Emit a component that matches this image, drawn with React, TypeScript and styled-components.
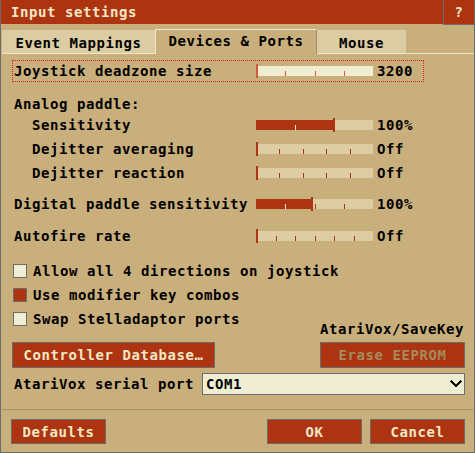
import React from "react";
import styled, { createGlobalStyle } from "styled-components";

const C = {
  bg: "#c9af7c",
  tab: "#dbcca3",
  cream: "#f0eed2",
  light: "#efe8c8",
  red: "#ac3410",
  redLight: "#d4583a",
  gray: "#6c6c6c",
  sep: "#a48e66",
  btnText: "#f2e8c4",
  disabled: "#a48c5c",
};

const Global = createGlobalStyle`
  html, body { margin: 0; padding: 0; background: ${C.bg}; }
  body {
    font-family: "DejaVu Sans Mono", "Liberation Mono", monospace;
    font-size: 14px;
    letter-spacing: 0.57px;
    font-weight: bold;
  }
  * { box-sizing: border-box; }
`;

const Window = styled.div`
  width: 475px;
  height: 453px;
  background: ${C.bg};
  border: 1px solid ${C.gray};
  border-top: none;
  display: flex;
  flex-direction: column;
  color: #000;
  line-height: 1;
`;

const TitleBar = styled.div`
  height: 24px;
  background: ${C.red};
  display: flex;
  align-items: flex-start;
  color: ${C.btnText};
`;

const TitleText = styled.div`
  padding-left: 10px;
  line-height: 24px;
`;

const HelpButton = styled.div`
  margin-left: auto;
  width: 31px;
  height: 25px;
  border-left: 1px solid ${C.gray};
  border-bottom: 1px solid ${C.gray};
  background: ${C.red};
  display: flex;
  align-items: center;
  justify-content: center;
`;

const TabBar = styled.div`
  margin-top: 5px;
  padding-left: 1px;
  height: 25px;
  display: flex;
  align-items: flex-end;
`;

const Tab = styled.div<{ $active?: boolean; $w: number }>`
  width: ${(p) => p.$w}px;
  height: ${(p) => (p.$active ? 25 : 24)}px;
  display: flex;
  justify-content: center;
  align-items: center;
  background: ${(p) => (p.$active ? C.bg : C.tab)};
  border-bottom: ${(p) => (p.$active ? "none" : `1px solid ${C.light}`)};
  border-top: ${(p) => (p.$active ? `1px solid ${C.light}` : "none")};
  border-left: ${(p) => (p.$active ? `1px solid ${C.light}` : "none")};
  border-right: ${(p) => (p.$active ? `1px solid ${C.sep}` : "none")};
  padding-top: ${(p) => (p.$active ? 0 : 2)}px;
  padding-bottom: ${(p) => (p.$active ? 3 : 0)}px;
`;

const TabFiller = styled.div`
  flex: 1;
  height: 1px;
  background: ${C.light};
`;

const Body = styled.div`
  padding: 6px 9px 0 11px;
  display: flex;
  flex-direction: column;
`;

const FocusRow = styled.div`
  width: 412px;
  height: 22px;
  border: 1px dotted #d42a1a;
  padding-left: 1px;
  display: flex;
  align-items: center;
`;

const Row = styled.div<{ $indent?: number; $mt?: number; $h?: number }>`
  height: ${(p) => p.$h ?? 24}px;
  margin-top: ${(p) => p.$mt ?? 0}px;
  padding-left: ${(p) => 2 + (p.$indent ?? 0)}px;
  display: flex;
  align-items: center;
`;

const Label = styled.div<{ $w?: number }>`
  width: ${(p) => (p.$w ? `${p.$w}px` : "auto")};
  flex-shrink: 0;
  white-space: nowrap;
`;

const SliderTrack = styled.div`
  position: relative;
  width: 117px;
  height: 14px;
  flex-shrink: 0;
`;

const SliderBar = styled.div<{ $focus?: boolean }>`
  position: absolute;
  left: 0;
  right: 0;
  top: 2px;
  height: 10px;
  background: ${(p) => (p.$focus ? C.cream : C.tab)};
`;

const SliderFill = styled.div`
  position: absolute;
  left: 0;
  top: 2px;
  height: 10px;
  background: ${C.red};
`;

const Tick = styled.div<{ $on?: boolean; $focus?: boolean }>`
  position: absolute;
  top: 7px;
  width: 1px;
  height: 5px;
  background: ${(p) => (p.$on ? C.light : p.$focus ? C.redLight : C.red)};
`;

const Handle = styled.div<{ $focus?: boolean }>`
  position: absolute;
  top: 0;
  width: 2px;
  height: 14px;
  background: ${(p) => (p.$focus ? C.redLight : C.red)};
`;

const Value = styled.div`
  margin-left: 4px;
`;

const Slider: React.FC<{ pos: number; steps: number; fill?: boolean; focus?: boolean }> = ({
  pos,
  steps,
  fill,
  focus,
}) => {
  const ticks = [];
  for (let i = 1; i < steps; i++) {
    const x = Math.round((117 / steps) * i);
    ticks.push(<Tick key={i} $on={fill && x < pos} $focus={focus} style={{ left: x }} />);
  }
  return (
    <SliderTrack>
      <SliderBar $focus={focus} />
      {fill && <SliderFill style={{ width: pos }} />}
      {ticks}
      <Handle $focus={focus} style={{ left: pos }} />
    </SliderTrack>
  );
};

const CheckRow = styled.div<{ $mt?: number }>`
  height: 24px;
  margin-top: ${(p) => p.$mt ?? 0}px;
  padding-left: 1px;
  display: flex;
  align-items: center;
`;

const Box = styled.div<{ $checked?: boolean }>`
  width: 14px;
  height: 14px;
  border: 1px solid ${C.gray};
  background: ${(p) => (p.$checked ? C.red : C.cream)};
  margin-right: 6px;
  flex-shrink: 0;
`;

const BottomBlock = styled.div`
  display: flex;
  justify-content: space-between;
  align-items: flex-end;
`;

const Column = styled.div<{ $w?: number }>`
  display: flex;
  flex-direction: column;
  width: ${(p) => (p.$w ? `${p.$w}px` : "auto")};
`;

const SideLabel = styled.div`
  line-height: 14px;
  height: 14px;
  white-space: nowrap;
`;

const Button = styled.div<{ $w: number; $h?: number; $mt?: number; $disabled?: boolean }>`
  width: ${(p) => p.$w}px;
  height: ${(p) => p.$h ?? 25}px;
  margin-top: ${(p) => p.$mt ?? 0}px;
  background: ${C.red};
  border: 1px solid ${C.gray};
  color: ${(p) => (p.$disabled ? C.disabled : C.btnText)};
  display: flex;
  align-items: center;
  justify-content: center;
  white-space: nowrap;
  flex-shrink: 0;
`;

const SerialRow = styled.div`
  margin-top: 5px;
  height: 22px;
  padding-left: 2px;
  display: flex;
  align-items: center;
`;

const Select = styled.div`
  width: 263px;
  height: 22px;
  border: 1px solid ${C.gray};
  background: ${C.cream};
  display: flex;
  align-items: center;
  padding-left: 3px;
  padding-right: 2px;
`;

const SelectText = styled.div`
  flex: 1;
`;

const Separator = styled.div`
  margin: 14px 1px 0 1px;
  height: 1px;
  background: ${C.sep};
`;

const Footer = styled.div`
  padding: 9px 9px 0 10px;
  display: flex;
  gap: 8px;
`;

const Spacer = styled.div`
  flex: 1;
`;

const Chevron = () => (
  <svg width="12" height="8" viewBox="0 0 12 8" shapeRendering="crispEdges">
    <path d="M1 1 L6 6 L11 1" stroke="#000" strokeWidth="2.4" fill="none" />
  </svg>
);

export default function App() {
  return (
    <>
      <Global />
      <Window>
        <TitleBar>
          <TitleText>Input settings</TitleText>
          <HelpButton>?</HelpButton>
        </TitleBar>
        <TabBar>
          <Tab $w={153}>Event Mappings</Tab>
          <Tab $w={162} $active>
            Devices &amp; Ports
          </Tab>
          <Tab $w={89}>Mouse</Tab>
          <TabFiller />
        </TabBar>
        <Body>
          <FocusRow>
            <Label $w={242}>Joystick deadzone size</Label>
            <Slider pos={0} steps={4} focus />
            <Value>3200</Value>
          </FocusRow>
          <Row $mt={13} $h={18}>
            <Label>Analog paddle:</Label>
          </Row>
          <Row $indent={18}>
            <Label $w={224}>Sensitivity</Label>
            <Slider pos={77} steps={3} fill />
            <Value>100%</Value>
          </Row>
          <Row $indent={18}>
            <Label $w={224}>Dejitter averaging</Label>
            <Slider pos={0} steps={5} />
            <Value>Off</Value>
          </Row>
          <Row $indent={18}>
            <Label $w={224}>Dejitter reaction</Label>
            <Slider pos={0} steps={5} />
            <Value>Off</Value>
          </Row>
          <Row $mt={7}>
            <Label $w={242}>Digital paddle sensitivity</Label>
            <Slider pos={55} steps={4} fill />
            <Value>100%</Value>
          </Row>
          <Row $mt={8}>
            <Label $w={242}>Autofire rate</Label>
            <Slider pos={0} steps={6} />
            <Value>Off</Value>
          </Row>
          <CheckRow $mt={11}>
            <Box />
            <Label>Allow all 4 directions on joystick</Label>
          </CheckRow>
          <CheckRow>
            <Box $checked />
            <Label>Use modifier key combos</Label>
          </CheckRow>
          <BottomBlock>
            <Column>
              <CheckRow>
                <Box />
                <Label>Swap Stelladaptor ports</Label>
              </CheckRow>
              <Button $w={203} $h={26} $mt={11}>
                Controller Database…
              </Button>
            </Column>
            <Column $w={145}>
              <SideLabel>AtariVox/SaveKey</SideLabel>
              <Button $w={145} $h={26} $mt={6} $disabled>
                Erase EEPROM
              </Button>
            </Column>
          </BottomBlock>
          <SerialRow>
            <Label $w={188}>AtariVox serial port</Label>
            <Select>
              <SelectText>COM1</SelectText>
              <Chevron />
            </Select>
          </SerialRow>
        </Body>
        <Separator />
        <Footer>
          <Button $w={95}>Defaults</Button>
          <Spacer />
          <Button $w={95}>OK</Button>
          <Button $w={95}>Cancel</Button>
        </Footer>
      </Window>
    </>
  );
}
